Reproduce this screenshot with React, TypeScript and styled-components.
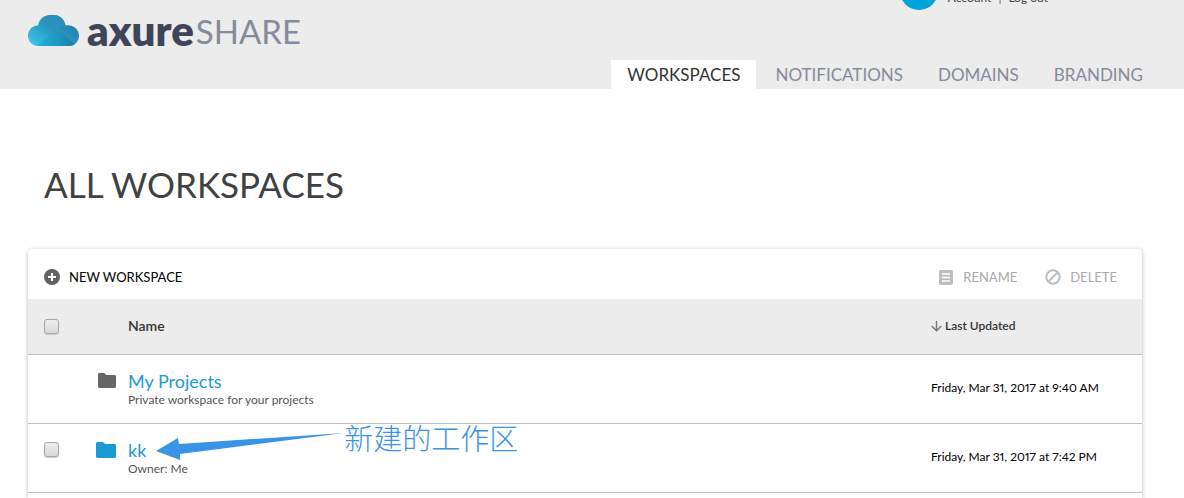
import React from "react";
import styled, { createGlobalStyle } from "styled-components";

const GlobalStyle = createGlobalStyle`
  *, *::before, *::after { box-sizing: border-box; }
  body {
    margin: 0;
    background: #fff;
    color: #333;
    font-family: Lato, "Liberation Sans", sans-serif;
  }
`;

const Page = styled.div`
  display: flex;
  flex-direction: column;
  min-height: 100vh;
`;

const Header = styled.header`
  background: #ececec;
  padding: 0 25px 0 28px;
  overflow: hidden;
`;

const Banner = styled.div`
  display: flex;
  justify-content: space-between;
  align-items: flex-start;
  height: 60px;
`;

const Logo = styled.a`
  display: flex;
  align-items: center;
  gap: 8px;
  padding-top: 9px;
  text-decoration: none;
  line-height: 40px;
`;

const Brand = styled.span`
  color: #3e4459;
  font-family: Lato, sans-serif;
  font-size: 42px;
  font-weight: 800;
`;

const Product = styled.span`
  color: #858b9b;
  font-size: 33px;
  font-weight: 400;
  margin: 2px 0 0 -6px;
`;

const Account = styled.div`
  display: flex;
  align-items: center;
  gap: 10px;
  margin: -28px 111px 0 0;
`;

const Avatar = styled.span`
  width: 38px;
  height: 38px;
  border-radius: 50%;
  background: #00a3da;
`;

const AccountLinks = styled.div`
  display: flex;
  gap: 7px;
  font-size: 12px;
  line-height: 16px;
  padding-top: 14px;
  color: #555;

  a {
    color: #444;
    text-decoration: none;
  }
`;

const Tabs = styled.nav`
  display: flex;
  justify-content: flex-end;
  gap: 3px;
`;

const Tab = styled.a<{ $active?: boolean }>`
  padding: 1px 16px 0;
  font-size: 17px;
  line-height: 28px;
  text-decoration: none;
  color: ${(p) => (p.$active ? "#333" : "#858b99")};
  background: ${(p) => (p.$active ? "#fff" : "transparent")};
`;

const Main = styled.main`
  flex: 1;
  display: flex;
  flex-direction: column;
  padding: 71px 42px 0 28px;
`;

const Title = styled.h1`
  margin: 0 0 41px;
  padding-left: 16px;
  font-size: 35px;
  line-height: 48px;
  font-weight: 400;
  color: #404142;
`;

const Card = styled.section`
  flex: 1;
  border-radius: 4px 4px 0 0;
  background: #fff;
  box-shadow: 0 1px 4px #b4b7c0;
`;

const Toolbar = styled.div`
  display: flex;
  align-items: center;
  gap: 28px;
  height: 50px;
  padding: 6px 25px 0 16px;
`;

const ToolButton = styled.button`
  display: flex;
  align-items: center;
  gap: 9px;
  padding: 0;
  border: 0;
  background: none;
  font: 400 13px/20px Lato, sans-serif;
  color: #000;

  &:first-child {
    margin-right: auto;
  }

  &:disabled {
    color: #aaa;
  }
`;

const Table = styled.table`
  width: 100%;
  table-layout: fixed;
  border-collapse: collapse;
`;

const HeadRow = styled.tr`
  height: 55px;
  background: #ececec;
  border-bottom: 1px solid #bfbfbf;
`;

const Row = styled.tr`
  height: 69px;
  border-bottom: 1px solid #bfbfbf;
`;

const Head = styled.th`
  padding: 0;
  text-align: left;
  font-size: 14px;
  line-height: 20px;
  font-weight: 600;
  color: #333;
`;

const Cell = styled.td`
  padding: 0;
`;

const CheckCell = styled(Cell)`
  padding-left: 16px;

  tbody & {
    padding-bottom: 16px;
  }
`;

const DateCell = styled(Cell)`
  padding-bottom: 2px;
  font-size: 12px;
  font-variant-numeric: proportional-nums;
  line-height: 16px;
  color: #000;
`;

const SortHead = styled.span`
  display: flex;
  align-items: center;
  gap: 3px;
  font-size: 12px;
`;

const Checkbox = styled.input`
  appearance: none;
  display: block;
  width: 15px;
  height: 15px;
  margin: 0;
  border: 1px solid #a6a6a6;
  border-radius: 3px;
  background: linear-gradient(#eee, #d9d9d9);
  box-shadow: 0 1px 1px #ccc;
`;

const FolderSlot = styled.span`
  display: flex;
  justify-content: flex-end;
  width: 20px;
  padding-bottom: 16px;
`;

const WorkspaceLink = styled.a`
  display: inline-block;
  position: relative;
  font-size: 18px;
  line-height: 22px;
  color: #1b9ad6;
  text-decoration: none;
`;

const Detail = styled.div`
  font-size: 12px;
  line-height: 16px;
  color: #555;
`;

const Callout = styled.span`
  position: absolute;
  left: 100%;
  top: -17px;
  display: flex;
  align-items: flex-start;
  margin-left: 10px;
  white-space: nowrap;
  color: #3a94e6;
  font-family: "Noto Sans CJK SC", sans-serif;
  font-size: 29px;
  line-height: 30px;
  font-weight: 300;
  pointer-events: none;

  svg {
    flex: none;
    margin-top: 9px;
  }
`;

const CloudLogo = () => (
  <svg width="51" height="31" viewBox="0 0 51 31" aria-hidden="true">
    <defs>
      <linearGradient id="cloudBase" x1="0" y1="1" x2="1" y2="0.2">
        <stop offset="0" stopColor="#3ecdf2" />
        <stop offset="0.5" stopColor="#2799c4" />
        <stop offset="1" stopColor="#2878a4" />
      </linearGradient>
      <linearGradient id="cloudFold" x1="0" y1="0" x2="1" y2="0">
        <stop offset="0" stopColor="#24b6dc" />
        <stop offset="1" stopColor="#1b7ba6" />
      </linearGradient>
      <clipPath id="cloudShape">
        <path d="M10 31a10 10 0 0 1-10-10.5C0 15 4.500 10.500 10 10.500C11 4 16.500 0 23 0h3c6 0 10.500 4.500 11.500 10.500C45 9.500 51 14 51 21c0 5.500-4.500 10-10 10Z" />
      </clipPath>
    </defs>
    <g clipPath="url(#cloudShape)">
      <rect width="51" height="31" fill="url(#cloudBase)" />
      <path d="M8 31 29 14.500 49 31Z" fill="url(#cloudFold)" />
      <path d="M14 4 29 14.500 40 7V0H14Z" fill="#3193c0" opacity="0.7" />
    </g>
  </svg>
);

const AddIcon = () => (
  <svg width="16" height="16" viewBox="0 0 16 16" aria-hidden="true">
    <circle cx="8" cy="8" r="8" fill="#636363" />
    <path d="M8 4v8M4 8h8" stroke="#fff" strokeWidth="2" />
  </svg>
);

const RenameIcon = () => (
  <svg width="15" height="15" viewBox="0 0 15 15" aria-hidden="true">
    <rect width="14" height="15" rx="2" fill="#bdbdbd" />
    <path d="M3 4h8M3 7.500h8M3 11h8" stroke="#fff" strokeWidth="1.300" />
  </svg>
);

const DeleteIcon = () => (
  <svg width="16" height="16" viewBox="0 0 16 16" aria-hidden="true">
    <g fill="none" stroke="#bdbdbd" strokeWidth="2">
      <circle cx="8" cy="8" r="6.700" />
      <path d="m3.500 12.500 9-9" />
    </g>
  </svg>
);

const SortArrow = () => (
  <svg width="11" height="12" viewBox="0 0 11 12" aria-hidden="true">
    <path d="M5.500 1v9.500M.7 6l4.800 4.800L10.300 6" fill="none" stroke="#777" strokeWidth="1.400" />
  </svg>
);

const Folder = ({ width, height, color }: { width: number; height: number; color: string }) => (
  <svg width={width} height={height} viewBox="0 0 20 16" preserveAspectRatio="none" aria-hidden="true">
    <path d="M1.500 0H7l2 2h9.500A1.500 1.500 0 0 1 20 3.500v11a1.500 1.500 0 0 1-1.500 1.500h-17A1.500 1.500 0 0 1 0 14.500v-13A1.500 1.500 0 0 1 1.500 0Z" fill={color} />
  </svg>
);

const CalloutArrow = () => (
  <svg width="188" height="30" viewBox="0 0 188 30" aria-hidden="true">
    <path d="M0 20 22 7l1 6 165-11L24 23v6Z" fill="#3a94e6" />
  </svg>
);

const tabs = ["WORKSPACES", "NOTIFICATIONS", "DOMAINS", "BRANDING"];

export default function App() {
  return (
    <Page>
      <GlobalStyle />
      <Header>
        <Banner>
          <Logo href="#">
            <CloudLogo />
            <Brand>axure</Brand>
            <Product>SHARE</Product>
          </Logo>
          <Account>
            <Avatar />
            <AccountLinks>
              <a href="#">Account</a>
              <span>|</span>
              <a href="#">Log out</a>
            </AccountLinks>
          </Account>
        </Banner>
        <Tabs>
          {tabs.map((name, i) => (
            <Tab key={name} href="#" $active={i === 0}>
              {name}
            </Tab>
          ))}
        </Tabs>
      </Header>
      <Main>
        <Title>ALL WORKSPACES</Title>
        <Card>
          <Toolbar>
            <ToolButton>
              <AddIcon />
              NEW WORKSPACE
            </ToolButton>
            <ToolButton disabled>
              <RenameIcon />
              RENAME
            </ToolButton>
            <ToolButton disabled>
              <DeleteIcon />
              DELETE
            </ToolButton>
          </Toolbar>
          <Table>
            <colgroup>
              <col style={{ width: 68 }} />
              <col style={{ width: 32 }} />
              <col />
              <col style={{ width: 211 }} />
            </colgroup>
            <thead>
              <HeadRow>
                <CheckCell>
                  <Checkbox type="checkbox" aria-label="Select all workspaces" />
                </CheckCell>
                <Cell />
                <Head>Name</Head>
                <Head>
                  <SortHead>
                    <SortArrow />
                    Last Updated
                  </SortHead>
                </Head>
              </HeadRow>
            </thead>
            <tbody>
              <Row>
                <Cell />
                <Cell>
                  <FolderSlot>
                    <Folder width={18} height={15} color="#666" />
                  </FolderSlot>
                </Cell>
                <Cell>
                  <WorkspaceLink href="#">My Projects</WorkspaceLink>
                  <Detail>Private workspace for your projects</Detail>
                </Cell>
                <DateCell>Friday, Mar 31, 2017 at 9:40 AM</DateCell>
              </Row>
              <Row>
                <CheckCell>
                  <Checkbox type="checkbox" aria-label="Select kk" />
                </CheckCell>
                <Cell>
                  <FolderSlot>
                    <Folder width={20} height={16} color="#1b9ad6" />
                  </FolderSlot>
                </Cell>
                <Cell>
                  <WorkspaceLink href="#">
                    kk
                    <Callout>
                      <CalloutArrow />
                      新建的工作区
                    </Callout>
                  </WorkspaceLink>
                  <Detail>Owner: Me</Detail>
                </Cell>
                <DateCell>Friday, Mar 31, 2017 at 7:42 PM</DateCell>
              </Row>
            </tbody>
          </Table>
        </Card>
      </Main>
    </Page>
  );
}
